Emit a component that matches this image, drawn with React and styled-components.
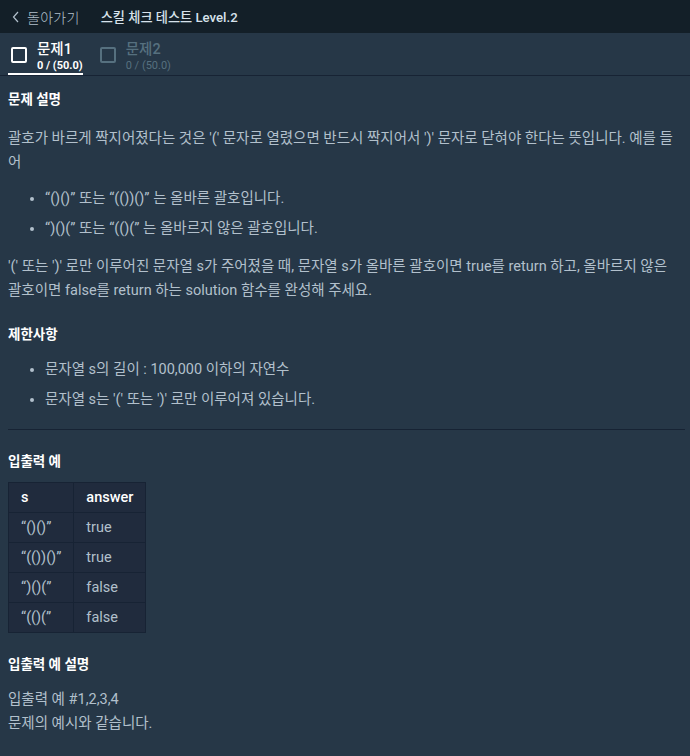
import React from "react";
import styled, { createGlobalStyle } from "styled-components";

const Global = createGlobalStyle`
  html, body { margin: 0; padding: 0; background: #263747; }
  body { font-family: Roboto, "Noto Sans CJK KR", sans-serif; }
  * { box-sizing: border-box; }
`;

const Page = styled.div`
  width: 690px;
  min-height: 756px;
  background: #263747;
  color: #b2c0cc;
`;

const Header = styled.header`
  height: 33px;
  background: #131f28;
  display: flex;
  align-items: center;
  padding-left: 12px;
  gap: 21px;
`;

const Back = styled.span`
  color: #b2c0cc;
  font-size: 14px;
  font-weight: 300;
  letter-spacing: 0.3px;
  display: flex;
  align-items: center;
  gap: 7px;
`;

const Title = styled.span`
  color: #d7e2eb;
  font-size: 13.2px;
  font-weight: 500;
`;

const TabBar = styled.nav`
  height: 43px;
  border-bottom: 1px solid #172334;
  display: flex;
  padding-left: 8px;
  gap: 14px;
`;

const Tab = styled.div`
  display: flex;
  align-items: center;
  gap: 10px;
  padding: 4px 0 0 3px;
  border-bottom: 2px solid ${(p) => (p.$active ? "#ffffff" : "transparent")};
  color: ${(p) => (p.$active ? "#ffffff" : "#56707f")};
`;

const Box = styled.span`
  width: 16px;
  height: 16px;
  border: 2px solid currentColor;
  border-radius: 2px;
`;

const TabText = styled.div`
  display: flex;
  flex-direction: column;
  line-height: 1;
  padding-top: 4px;
`;

const TabName = styled.span`
  font-size: 14.5px;
  font-weight: 500;
`;

const TabScore = styled.span`
  font-size: 11px;
  font-weight: ${(p) => (p.$active ? 700 : 400)};
  margin-top: 3px;
`;

const Content = styled.main`
  padding: 0 5px 20px 8px;
  font-size: 14.5px;
  line-height: 24px;
`;

const H = styled.h5`
  margin: 19px 0 ${(p) => p.$mb}px;
  font-size: 13.5px;
  line-height: 24px;
  font-weight: 700;
  color: #ffffff;
  &:first-child {
    margin-top: 11px;
  }
`;

const P = styled.p`
  margin: 12px 0;
  word-break: ${(p) => (p.$keep ? "keep-all" : "normal")};
`;

const List = styled.ul`
  margin: 12px 0 14px;
  padding-left: 37px;
`;

const Item = styled.li`
  & + & {
    margin-top: 6px;
  }
`;

const Rule = styled.hr`
  border: 0;
  border-top: 1px solid #172334;
  margin: 17px 0 19px;
`;

const Table = styled.table`
  border-collapse: collapse;
  background: #202b3d;
  margin: 0 0 19px;
`;

const Th = styled.th`
  border: 1px solid #172334;
  color: #ffffff;
  font-weight: 500;
  text-align: left;
  height: 30px;
  padding: 0 12px;
`;

const Td = styled.td`
  border: 1px solid #172334;
  height: 30px;
  padding: 0 12px;
`;

const rows = [
  ["“()()”", "true"],
  ["“(())()”", "true"],
  ["“)()(”", "false"],
  ["“(()(”", "false"],
];

export default function App() {
  return (
    <Page>
      <Global />
      <Header>
        <Back>
          <svg width="8" height="12" viewBox="0 0 8 12">
            <path d="M6 1 L1.5 6 L6 11" fill="none" stroke="#b2c0cc" strokeWidth="1.2" />
          </svg>
          돌아가기
        </Back>
        <Title>스킬 체크 테스트 Level.2</Title>
      </Header>
      <TabBar>
        <Tab $active>
          <Box />
          <TabText>
            <TabName>문제1</TabName>
            <TabScore $active>0 / (50.0)</TabScore>
          </TabText>
        </Tab>
        <Tab>
          <Box />
          <TabText>
            <TabName>문제2</TabName>
            <TabScore>0 / (50.0)</TabScore>
          </TabText>
        </Tab>
      </TabBar>
      <Content>
        <H $mb={16}>문제 설명</H>
        <P>
          괄호가 바르게 짝지어졌다는 것은 '(' 문자로 열렸으면 반드시 짝지어서 ')' 문자로 닫혀야 한다는 뜻입니다. 예를 들어
        </P>
        <List>
          <Item>“()()” 또는 “(())()” 는 올바른 괄호입니다.</Item>
          <Item>“)()(” 또는 “(()(” 는 올바르지 않은 괄호입니다.</Item>
        </List>
        <P $keep>
          '(' 또는 ')' 로만 이루어진 문자열 s가 주어졌을 때, 문자열 s가 올바른 괄호이면 true를 return 하고, 올바르지 않은 괄호이면 false를 return 하는 solution 함수를 완성해 주세요.
        </P>
        <H $mb={10}>제한사항</H>
        <List>
          <Item>문자열 s의 길이 : 100,000 이하의 자연수</Item>
          <Item>문자열 s는 '(' 또는 ')' 로만 이루어져 있습니다.</Item>
        </List>
        <Rule />
        <H $mb={9}>입출력 예</H>
        <Table>
          <thead>
            <tr>
              <Th>s</Th>
              <Th>answer</Th>
            </tr>
          </thead>
          <tbody>
            {rows.map(([s, a]) => (
              <tr key={s}>
                <Td>{s}</Td>
                <Td>{a}</Td>
              </tr>
            ))}
          </tbody>
        </Table>
        <H $mb={12}>입출력 예 설명</H>
        <P>
          입출력 예 #1,2,3,4
          <br />
          문제의 예시와 같습니다.
        </P>
      </Content>
    </Page>
  );
}
